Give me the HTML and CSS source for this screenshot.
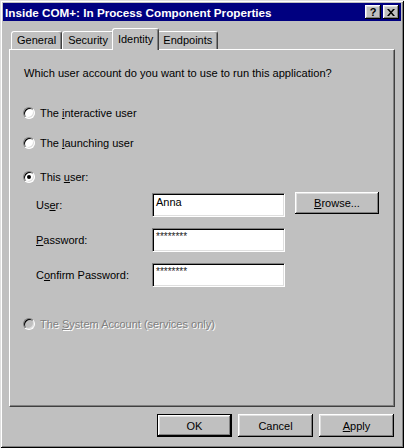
FILE: index.html
```html
<!DOCTYPE html>
<html lang="en">
<head>
    <meta charset="UTF-8">
    <title>Inside COM+: In Process Component Properties</title>
    <link rel="stylesheet" href="styles.css">
</head>
<body>
    <div class="window">
        <div class="titlebar">
            <span class="title">Inside COM+: In Process Component Properties</span>
            <div class="title-buttons">
                <span class="tbtn help">?</span>
                <span class="tbtn">
                    <svg width="8" height="7" viewBox="0 0 8 7"><path d="M0 0h2l6 7h-2z M6 0h2l-6 7h-2z" fill="#000"/></svg>
                </span>
            </div>
        </div>

        <div class="tabs">
            <div class="tab">General</div>
            <div class="tab">Security</div>
            <div class="tab active">Identity</div>
            <div class="tab">Endpoints</div>
        </div>

        <div class="panel">
            <p class="question">Which user account do you want to use to run this application?</p>

            <div class="option opt-interactive"><span class="radio"></span><span>The <u>i</u>nteractive user</span></div>
            <div class="option opt-launching"><span class="radio"></span><span>The <u>l</u>aunching user</span></div>
            <div class="option opt-this"><span class="radio checked"></span><span>This <u>u</u>ser:</span></div>

            <div class="fields">
                <span>Us<u>e</u>r:</span>
                <div class="field">Anna</div>
                <button class="btn browse"><u>B</u>rowse...</button>

                <span><u>P</u>assword:</span>
                <div class="field secret">********</div>
                <span></span>

                <span>C<u>o</u>nfirm Password:</span>
                <div class="field secret">********</div>
                <span></span>
            </div>

            <div class="option disabled opt-system"><span class="radio"></span><span>The <u>S</u>ystem Account (services only)</span></div>
        </div>

        <div class="actions">
            <button class="btn default">OK</button>
            <button class="btn">Cancel</button>
            <button class="btn"><u>A</u>pply</button>
        </div>
    </div>
</body>
</html>
```

FILE: styles.css
```css
body {
    margin: 0;
    background-color: #c0c0c0;
    color: #000;
    font-family: "Liberation Sans", Arial, sans-serif;
    font-size: 11px;
}
.window {
    width: 404px;
    height: 448px;
    box-sizing: border-box;
    padding: 3px;
    display: flex;
    flex-direction: column;
    background-color: #c0c0c0;
    box-shadow: inset 1px 1px #dfdfdf, inset -1px -1px #000, inset 2px 2px #fff, inset -2px -2px #808080;
}

/* barre de titre */
.titlebar {
    height: 18px;
    padding: 0 2px;
    display: flex;
    align-items: center;
    justify-content: space-between;
    background-color: #000080;
    color: #fff;
    font-weight: bold;
}
.title {
    font-size: 11.7px;
}
.title-buttons {
    display: flex;
    gap: 2px;
}
.tbtn {
    width: 16px;
    height: 14px;
    box-sizing: border-box;
    display: flex;
    align-items: center;
    justify-content: center;
    background-color: #c0c0c0;
    color: #000;
    box-shadow: inset -1px -1px #000, inset 1px 1px #fff, inset -2px -2px #808080, inset 2px 2px #dfdfdf;
}
.tbtn.help {
    font-size: 11px;
    line-height: 12px;
}

/* onglets */
.tabs {
    display: flex;
    align-items: flex-end;
    margin: 7px 6px 0;
    padding-left: 2px;
}
.tab {
    height: 18px;
    box-sizing: border-box;
    padding: 1px 5px 0;
    line-height: 14px;
    border: 1px solid;
    border-bottom: none;
    border-color: #fff #404040 transparent #fff;
    border-radius: 3px 3px 0 0;
    box-shadow: inset -1px 0 #808080;
    background-color: #c0c0c0;
}
.tab.active {
    height: 22px;
    margin: 0 -2px -1px;
    padding-top: 3px;
    position: relative;
    z-index: 1;
}

/* panneau */
.panel {
    flex: 1;
    margin: 0 6px;
    padding: 17px 13px 0;
    border: 1px solid;
    border-color: #fff #404040 #404040 #fff;
    box-shadow: inset -1px -1px #808080;
}
.question {
    margin: 0 0 0 1px;
    line-height: 13px;
    font-size: 11.1px;
}
.option {
    height: 16px;
    display: flex;
    align-items: center;
    gap: 5px;
}
.opt-interactive { margin-top: 25px; }
.opt-launching { margin-top: 14px; }
.opt-this { margin-top: 18px; }
.opt-system { margin-top: 29px; }
.radio {
    width: 12px;
    height: 12px;
    box-sizing: border-box;
    display: flex;
    align-items: center;
    justify-content: center;
    border-radius: 50%;
    border: 1px solid;
    border-color: #808080 #fff #fff #808080;
    box-shadow: inset 1px 1px #000, inset -1px -1px #dfdfdf;
    background-color: #fff;
}
.radio.checked::after {
    content: "";
    width: 4px;
    height: 4px;
    border-radius: 50%;
    background-color: #000;
}
.option.disabled {
    color: #808080;
    text-shadow: 1px 1px #fff;
}
.option.disabled .radio {
    background-color: #c0c0c0;
}

/* champs */
.fields {
    display: grid;
    grid-template-columns: 116px 133px auto;
    row-gap: 11px;
    align-items: center;
    margin: 8px 0 0 13px;
}
.field {
    height: 24px;
    box-sizing: border-box;
    padding: 1px 3px;
    line-height: 14px;
    background-color: #fff;
    border: 1px solid;
    border-color: #808080 #fff #fff #808080;
    box-shadow: inset 1px 1px #000, inset -1px -1px #dfdfdf;
}
.field.secret {
    font-size: 10px;
    color: #222;
}

/* boutons */
.btn {
    width: 75px;
    height: 23px;
    box-sizing: border-box;
    padding: 0;
    border: none;
    background-color: #c0c0c0;
    color: #000;
    font-family: inherit;
    font-size: 11px;
    box-shadow: inset -1px -1px #000, inset 1px 1px #fff, inset -2px -2px #808080, inset 2px 2px #dfdfdf;
}
.btn.default {
    border: 1px solid #000;
}
.btn.browse {
    width: 84px;
    height: 22px;
    margin: -1px 0 0 10px;
    align-self: start;
}
.actions {
    display: flex;
    justify-content: flex-end;
    gap: 6px;
    padding: 7px 7px 8px;
}
```
